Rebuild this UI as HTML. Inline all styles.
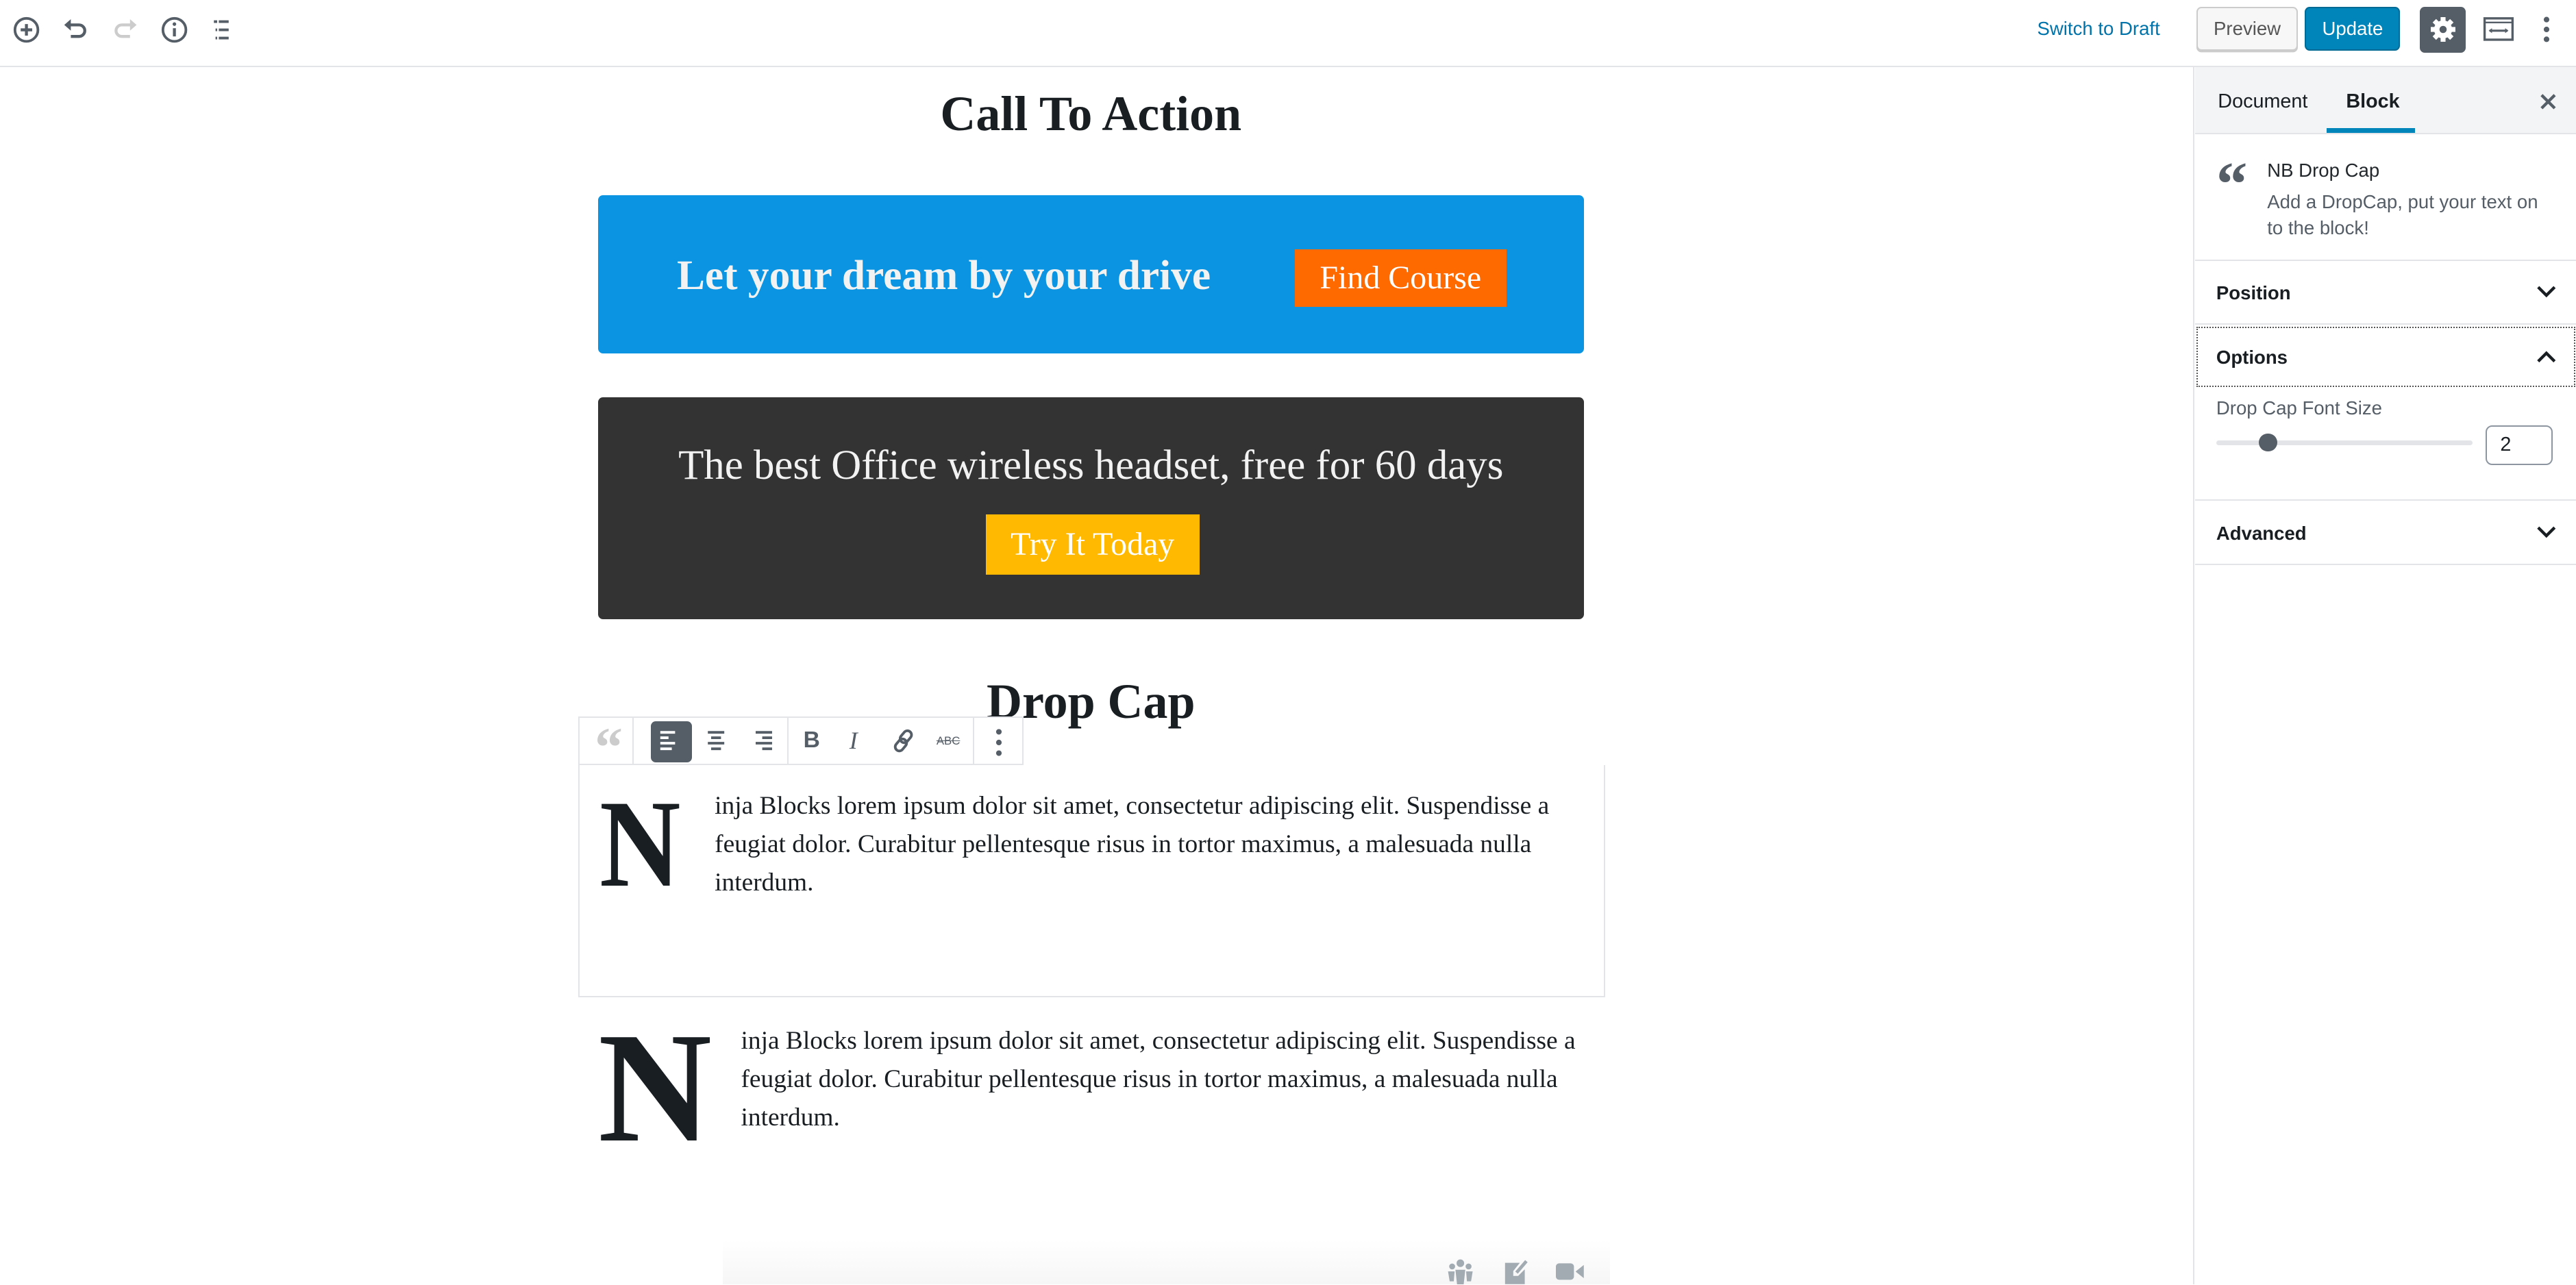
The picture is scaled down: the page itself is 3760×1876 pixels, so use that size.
<!DOCTYPE html>
<html><head><meta charset="utf-8"><style>
html,body{margin:0;padding:0;background:#fff;overflow:hidden}
body{width:3760px;height:1876px}
#w{zoom:2.398;width:1568px;height:782px;position:relative;font-family:"Liberation Sans",sans-serif;color:#191e23}
.a{position:absolute}
.serif{font-family:"Liberation Serif",serif}
.ico{position:absolute}
</style></head><body><div id="w">
<div class="a" style="left:0;top:0;width:1568px;height:40px;border-bottom:1px solid #e2e4e7;background:#fff"></div>
<svg class="ico" style="left:7px;top:9px" width="18" height="18" viewBox="0 0 18 18"><circle cx="9" cy="9" r="7" fill="none" stroke="#555d66" stroke-width="1.6"/><path d="M9 5.5v7M5.5 9h7" stroke="#555d66" stroke-width="1.8"/></svg>
<svg class="ico" style="left:37px;top:9px" width="18" height="18" viewBox="0 0 18 18"><path d="M4 6h7a3.5 3.5 0 0 1 0 7H6" fill="none" stroke="#555d66" stroke-width="1.8"/><path d="M2 6l4-3.5v7z" fill="#555d66"/></svg>
<svg class="ico" style="left:67px;top:9px" width="18" height="18" viewBox="0 0 18 18"><path d="M14 6H7a3.5 3.5 0 0 0 0 7h5" fill="none" stroke="#ccc" stroke-width="1.8"/><path d="M16 6l-4-3.5v7z" fill="#ccc"/></svg>
<svg class="ico" style="left:97px;top:9px" width="18" height="18" viewBox="0 0 18 18"><circle cx="9" cy="9" r="7" fill="none" stroke="#555d66" stroke-width="1.6"/><path d="M9 8v5" stroke="#555d66" stroke-width="1.8"/><circle cx="9" cy="5.5" r="1.1" fill="#555d66"/></svg>
<svg class="ico" style="left:127px;top:9px" width="18" height="18" viewBox="0 0 18 18"><path d="M3 4h2M6 4h6M4 9h1M6 9h6M4 14h1M6 14h6" stroke="#555d66" stroke-width="1.6"/></svg>
<div class="a" style="left:1240px;top:11px;font-size:11.5px;color:#0073aa">Switch to Draft</div>
<div class="a" style="left:1337px;top:4px;width:60px;height:25px;border:1px solid #ccc;border-radius:3px;background:#f7f7f7;box-shadow:0 1px 0 #ccc;font-size:11.5px;color:#555;text-align:center;line-height:25px">Preview</div>
<div class="a" style="left:1403px;top:4px;width:58px;height:27px;border-radius:3px;background:#0085ba;border:1px solid #006a95;box-sizing:border-box;font-size:11.5px;color:#fff;text-align:center;line-height:25px">Update</div>
<div class="a" style="left:1473px;top:4px;width:28px;height:28px;border-radius:3px;background:#555d66"></div>
<svg class="ico" style="left:1477px;top:8px" width="20" height="20" viewBox="0 0 20 20"><g fill="#fff"><circle cx="10" cy="10" r="5.5"/><rect x="8.5" y="2.5" width="3" height="15"/><rect x="2.5" y="8.5" width="15" height="3"/><rect x="8.5" y="2.5" width="3" height="15" transform="rotate(45 10 10)"/><rect x="8.5" y="2.5" width="3" height="15" transform="rotate(-45 10 10)"/></g><circle cx="10" cy="10" r="2.2" fill="#555d66"/></svg>
<svg class="ico" style="left:1511px;top:9px" width="20" height="18" viewBox="0 0 20 18"><rect x="1.5" y="2" width="17" height="13" fill="none" stroke="#555d66" stroke-width="1.4"/><path d="M1.5 4.5h17" stroke="#555d66" stroke-width="1"/><path d="M4.5 9.5h11" stroke="#555d66" stroke-width="1.3"/><path d="M4 9.5l2-1.5v3zM16 9.5l-2-1.5v3z" fill="#555d66"/></svg>
<svg class="ico" style="left:1545px;top:8px" width="10" height="20" viewBox="0 0 10 20"><circle cx="5" cy="4" r="1.7" fill="#555d66"/><circle cx="5" cy="10" r="1.7" fill="#555d66"/><circle cx="5" cy="16" r="1.7" fill="#555d66"/></svg>

<div class="a" style="left:1335px;top:41px;width:233px;height:741px;border-left:1px solid #e2e4e7;background:#fff"></div>
<div class="a" style="left:1336px;top:41px;width:232px;height:40px;background:#f3f4f5;border-bottom:1px solid #e2e4e7"></div>
<div class="a" style="left:1350px;top:55px;font-size:12px;color:#191e23">Document</div>
<div class="a" style="left:1428px;top:55px;font-size:12px;font-weight:bold;color:#191e23">Block</div>
<div class="a" style="left:1416px;top:78px;width:54px;height:3px;background:#0085ba"></div>
<svg class="ico" style="left:1545px;top:56px" width="12" height="12" viewBox="0 0 12 12"><path d="M2 2l8 8M10 2l-8 8" stroke="#555d66" stroke-width="1.8"/></svg>
<div class="a serif" style="left:1349px;top:93px;font-size:38px;font-weight:bold;color:#555d66;line-height:38px">&ldquo;</div>
<div class="a" style="left:1380px;top:97px;font-size:11.5px;color:#23282d">NB Drop Cap</div>
<div class="a" style="left:1380px;top:115px;font-size:11.5px;color:#555d66;line-height:16px;white-space:nowrap">Add a DropCap, put your text on<br>to the block!</div>
<div class="a" style="left:1336px;top:158px;width:232px;border-top:1px solid #e2e4e7"></div>
<div class="a" style="left:1349px;top:172px;font-size:11.5px;font-weight:bold">Position</div>
<svg class="ico" style="left:1543px;top:172px" width="14" height="12" viewBox="0 0 14 12"><path d="M2 3l5 5 5-5" fill="none" stroke="#191e23" stroke-width="1.8"/></svg>
<div class="a" style="left:1336px;top:197px;width:232px;border-top:1px solid #e2e4e7"></div>
<div class="a" style="left:1337px;top:199px;width:229px;height:35px;border:1px dotted #555"></div>
<div class="a" style="left:1349px;top:211px;font-size:11.5px;font-weight:bold">Options</div>
<svg class="ico" style="left:1543px;top:211px" width="14" height="12" viewBox="0 0 14 12"><path d="M2 9l5-5 5 5" fill="none" stroke="#191e23" stroke-width="1.8"/></svg>
<div class="a" style="left:1349px;top:242px;font-size:11.5px;color:#555d66">Drop Cap Font Size</div>
<div class="a" style="left:1349px;top:268px;width:156px;height:3px;border-radius:2px;background:#e2e4e7"></div>
<div class="a" style="left:1375px;top:264px;width:11px;height:11px;border-radius:50%;background:#555d66"></div>
<div class="a" style="left:1513px;top:259px;width:41px;height:24px;border:1px solid #8d96a0;border-radius:4px;box-sizing:border-box;font-size:12px;line-height:22px;padding-left:8px">2</div>
<div class="a" style="left:1336px;top:304px;width:232px;border-top:1px solid #e2e4e7"></div>
<div class="a" style="left:1349px;top:318px;font-size:11.5px;font-weight:bold">Advanced</div>
<svg class="ico" style="left:1543px;top:318px" width="14" height="12" viewBox="0 0 14 12"><path d="M2 3l5 5 5-5" fill="none" stroke="#191e23" stroke-width="1.8"/></svg>
<div class="a" style="left:1336px;top:343px;width:232px;border-top:1px solid #e2e4e7"></div>

<div class="a serif" style="left:364px;width:600px;top:52px;text-align:center;font-size:30px;font-weight:bold;color:#191e23">Call To Action</div>
<div class="a" style="left:364px;top:119px;width:600px;height:96px;background:#0a94e2;border-radius:3px"></div>
<div class="a serif" style="left:412px;top:153px;font-size:25.6px;font-weight:bold;color:#f2f2f2;white-space:nowrap">Let your dream by your drive</div>
<div class="a serif" style="left:788px;top:152px;width:129px;height:35px;background:#ff6a00;color:#fff;font-size:20px;text-align:center;line-height:35px">Find Course</div>
<div class="a" style="left:364px;top:242px;width:600px;height:135px;background:#333;border-radius:3px"></div>
<div class="a serif" style="left:364px;width:600px;top:269px;text-align:center;font-size:25.4px;color:#f2f2f2;white-space:nowrap">The best Office wireless headset, free for 60 days</div>
<div class="a serif" style="left:600px;top:313px;width:130px;height:37px;background:#ffb900;color:#fff;font-size:20px;text-align:center;line-height:37px">Try It Today</div>

<div class="a serif" style="left:364px;width:600px;top:410px;text-align:center;font-size:30px;font-weight:bold;color:#191e23">Drop Cap</div>
<div class="a" style="left:352px;top:436px;width:271px;height:30px;border:1px solid #e2e4e7;box-sizing:border-box;background:#fff"></div>
<div class="a" style="left:385px;top:437px;height:29px;border-left:1px solid #e2e4e7"></div>
<div class="a" style="left:479px;top:437px;height:29px;border-left:1px solid #e2e4e7"></div>
<div class="a" style="left:592px;top:437px;height:29px;border-left:1px solid #e2e4e7"></div>
<div class="a serif" style="left:362px;top:438px;font-size:34px;font-weight:bold;color:#ccc;line-height:34px">&ldquo;</div>
<div class="a" style="left:396px;top:439px;width:25px;height:25px;border-radius:3px;background:#555d66"></div>
<svg class="ico" style="left:400px;top:443px" width="16" height="16" viewBox="0 0 16 16"><path d="M2 3h9M2 6.3h5M2 9.6h9M2 13h7" stroke="#fff" stroke-width="1.6"/></svg>
<svg class="ico" style="left:428px;top:443px" width="16" height="16" viewBox="0 0 16 16"><path d="M3 3h10M5 6.3h6M3 9.6h10M5 13h6" stroke="#555d66" stroke-width="1.6"/></svg>
<svg class="ico" style="left:455px;top:443px" width="16" height="16" viewBox="0 0 16 16"><path d="M5 3h10M9 6.3h6M5 9.6h10M9 13h6" stroke="#555d66" stroke-width="1.6"/></svg>
<div class="a" style="left:489px;top:443px;font-size:14px;font-weight:bold;color:#555d66">B</div>
<div class="a serif" style="left:517px;top:442px;font-size:15px;font-style:italic;color:#555d66">I</div>
<svg class="ico" style="left:541px;top:442px" width="18" height="18" viewBox="0 0 18 18"><g fill="none" stroke="#555d66" stroke-width="1.6"><rect x="8" y="2.5" width="5" height="8" rx="2.5" transform="rotate(40 10.5 6.5)"/><rect x="5" y="7.5" width="5" height="8" rx="2.5" transform="rotate(40 7.5 11.5)"/></g></svg>
<div class="a" style="left:570px;top:447px;font-size:7px;color:#555d66;text-decoration:line-through">ABC</div>
<svg class="ico" style="left:603px;top:442px" width="10" height="20" viewBox="0 0 10 20"><circle cx="5" cy="3.5" r="1.7" fill="#555d66"/><circle cx="5" cy="10" r="1.7" fill="#555d66"/><circle cx="5" cy="16.5" r="1.7" fill="#555d66"/></svg>
<div class="a" style="left:352px;top:466px;width:625px;height:141px;border:1px solid #e2e4e7;border-top:none;box-sizing:border-box"></div>
<div class="a serif" style="left:365px;top:474px;font-size:76px;font-weight:bold;line-height:80px;color:#191e23;transform:scaleX(0.9);transform-origin:left">N</div>
<div class="a serif" style="left:435px;top:479px;font-size:15.6px;line-height:23.5px;color:#191e23;white-space:nowrap">inja Blocks lorem ipsum dolor sit amet, consectetur adipiscing elit. Suspendisse a<br>feugiat dolor. Curabitur pellentesque risus in tortor maximus, a malesuada nulla<br>interdum.</div>
<div class="a serif" style="left:364px;top:612px;font-size:96px;font-weight:bold;line-height:100px;color:#191e23">N</div>
<div class="a serif" style="left:451px;top:622px;font-size:15.6px;line-height:23.5px;color:#191e23;white-space:nowrap">inja Blocks lorem ipsum dolor sit amet, consectetur adipiscing elit. Suspendisse a<br>feugiat dolor. Curabitur pellentesque risus in tortor maximus, a malesuada nulla<br>interdum.</div>
<div class="a" style="left:440px;top:755px;width:540px;height:27px;background:linear-gradient(#fff,#f6f6f6)"></div>
<svg class="ico" style="left:880px;top:766px" width="18" height="16" viewBox="0 0 18 16"><g fill="#a2aab2"><circle cx="9" cy="3" r="2.3"/><circle cx="4" cy="5" r="1.8"/><circle cx="14" cy="5" r="1.8"/><path d="M6 7h6l-1 9H7z"/><path d="M1.5 8h4l-.5 6H2.5z"/><path d="M12.5 8h4l-1 6h-2.5z"/></g></svg>
<svg class="ico" style="left:914px;top:765px" width="18" height="17" viewBox="0 0 18 17"><path d="M2 4h9l-4 5v3h3l4-4v9H2z" fill="#a2aab2"/><path d="M9 10l6-7" stroke="#a2aab2" stroke-width="2"/></svg>
<svg class="ico" style="left:947px;top:768px" width="18" height="12" viewBox="0 0 18 12"><rect x="0" y="1" width="11" height="10" rx="2" fill="#a2aab2"/><path d="M12 6l5-4v8z" fill="#a2aab2"/></svg>
</div></body></html>
